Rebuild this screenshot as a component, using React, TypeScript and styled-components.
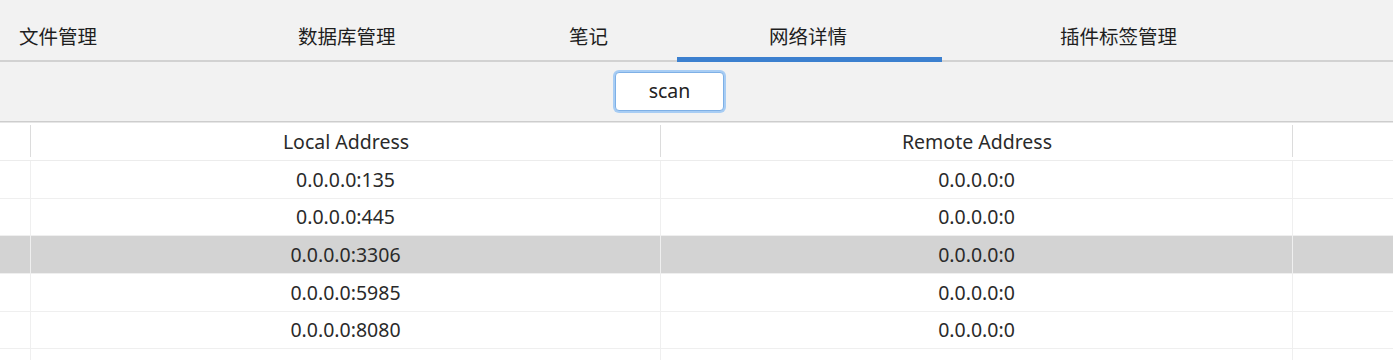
import React from 'react';
import styled, { createGlobalStyle } from 'styled-components';

type Tab = { label: string, width?: number, pad: number, active?: boolean };
type Conn = { local: string, remote: string };

const tabs: Tab[] = [
    { label: '文件管理', width: 200, pad: 19 },
    { label: '数据库管理', width: 250, pad: 98 },
    { label: '笔记', width: 227, pad: 119 },
    { label: '网络详情', width: 265, pad: 92, active: true },
    { label: '插件标签管理', pad: 118 },
];

const connections: Conn[] = [
    { local: '0.0.0.0:135', remote: '0.0.0.0:0' },
    { local: '0.0.0.0:445', remote: '0.0.0.0:0' },
    { local: '0.0.0.0:3306', remote: '0.0.0.0:0' },
    { local: '0.0.0.0:5985', remote: '0.0.0.0:0' },
    { local: '0.0.0.0:8080', remote: '0.0.0.0:0' },
    { local: '0.0.0.0:10057', remote: '0.0.0.0:0' },
];

const SELECTED = 2;

export default function App() {
    return (
        <>
            <GlobalStyle />
            <Page>
                <TabBar>
                    {tabs.map((t) => (
                        <TabItem key={t.label} $width={t.width} $pad={t.pad} $active={t.active}>
                            {t.label}
                        </TabItem>
                    ))}
                </TabBar>
                <Toolbar>
                    <ScanButton>scan</ScanButton>
                </Toolbar>
                <Table>
                    <HeaderRow>
                        <HeaderCell />
                        <HeaderCell>Local Address</HeaderCell>
                        <HeaderCell>Remote Address</HeaderCell>
                        <HeaderCell $last />
                    </HeaderRow>
                    {connections.map((c, i) => (
                        <Row key={c.local} $selected={i === SELECTED}>
                            <Cell />
                            <Cell>{c.local}</Cell>
                            <Cell>{c.remote}</Cell>
                            <Cell $last />
                        </Row>
                    ))}
                </Table>
            </Page>
        </>
    );
}

const GlobalStyle = createGlobalStyle`
    html, body {
        margin: 0;
        padding: 0;
        background: #f2f2f2;
        overflow: hidden;
    }
    body {
        font-family: "Noto Sans", "Noto Sans CJK SC", sans-serif;
        color: #222;
    }
`

const Page = styled.div`
    width: 1393px;
    height: 360px;
    display: flex;
    flex-direction: column;
    overflow: hidden;
`

const TabBar = styled.div`
    height: 62px;
    display: flex;
    flex-shrink: 0;
    box-shadow: inset 0 -2px 0 #d2d2d2;
`

const TabItem = styled.div<{ $width?: number, $pad: number, $active?: boolean }>`
    ${p => p.$width ? `width: ${p.$width}px;` : 'flex: 1;'}
    box-sizing: border-box;
    padding-left: ${p => p.$pad}px;
    padding-top: 9px;
    display: flex;
    align-items: center;
    font-family: "Noto Sans CJK SC", sans-serif;
    font-size: 19.5px;
    color: #1e1e1e;
    white-space: nowrap;
    box-shadow: ${p => p.$active ? 'inset 0 -5px 0 #3c80cf' : 'none'};
`

const Toolbar = styled.div`
    height: 59px;
    flex-shrink: 0;
    display: flex;
    align-items: center;
    justify-content: center;
    padding-right: 54px;
    border-bottom: 1px solid #cdcdcd;
`

const ScanButton = styled.button`
    width: 109px;
    height: 39px;
    box-sizing: border-box;
    background: #fff;
    border: 1px solid #7eb0e6;
    border-radius: 4px;
    box-shadow: 0 0 0 2px #a8cdf4;
    font-family: "Noto Sans", sans-serif;
    font-size: 19.5px;
    color: #222;
    padding: 0 0 2px;
`

const Table = styled.div`
    flex: 1;
    background: #fff;
    border-top: 1px solid #e6e6e6;
`

const HeaderRow = styled.div`
    display: grid;
    grid-template-columns: 31px 630px 632px 1fr;
    height: 37px;
    border-bottom: 1px solid #ececec;
`

const HeaderCell = styled.div<{ $last?: boolean }>`
    position: relative;
    display: flex;
    align-items: center;
    justify-content: center;
    font-size: 19.5px;
    color: #2a2a2a;

    &::after {
        content: '';
        display: ${p => p.$last ? 'none' : 'block'};
        position: absolute;
        right: 0;
        top: 2px;
        bottom: 3px;
        width: 1px;
        background: #dcdcdc;
    }
`

const Row = styled.div<{ $selected?: boolean }>`
    display: grid;
    grid-template-columns: 31px 630px 632px 1fr;
    height: 37.66px;
    box-sizing: border-box;
    border-bottom: 1px solid #efefef;
    background: ${p => p.$selected ? '#d3d3d3' : '#fff'};
`

const Cell = styled.div<{ $last?: boolean }>`
    display: flex;
    align-items: center;
    justify-content: center;
    font-size: 19.5px;
    color: #2a2a2a;
    border-right: ${p => p.$last ? 'none' : '1px solid #efefef'};
`
